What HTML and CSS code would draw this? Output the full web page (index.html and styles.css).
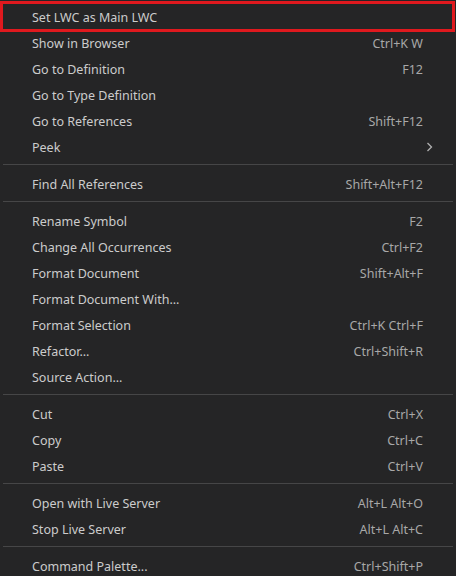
FILE: index.html
```html
<!DOCTYPE html>
<html>
<head>
<meta charset="utf-8">
<link rel="stylesheet" href="styles.css">
</head>
<body>
<div class="menu">
  <div class="item first"><span class="label">Set LWC as Main LWC</span><span class="key"></span></div>
  <div class="item"><span class="label">Show in Browser</span><span class="key">Ctrl+K W</span></div>
  <div class="item"><span class="label">Go to Definition</span><span class="key">F12</span></div>
  <div class="item"><span class="label">Go to Type Definition</span><span class="key"></span></div>
  <div class="item"><span class="label">Go to References</span><span class="key">Shift+F12</span></div>
  <div class="item"><span class="label">Peek</span><span class="key"></span>
    <svg class="chev" width="8" height="10" viewBox="0 0 8 10"><path d="M1.5 1 L5.5 5 L1.5 9" fill="none" stroke="#b0b0b0" stroke-width="1.3"/></svg>
  </div>
  <div class="sep"></div>
  <div class="item"><span class="label">Find All References</span><span class="key">Shift+Alt+F12</span></div>
  <div class="sep"></div>
  <div class="item"><span class="label">Rename Symbol</span><span class="key">F2</span></div>
  <div class="item"><span class="label">Change All Occurrences</span><span class="key">Ctrl+F2</span></div>
  <div class="item"><span class="label">Format Document</span><span class="key">Shift+Alt+F</span></div>
  <div class="item"><span class="label">Format Document With...</span><span class="key"></span></div>
  <div class="item"><span class="label">Format Selection</span><span class="key">Ctrl+K Ctrl+F</span></div>
  <div class="item"><span class="label">Refactor...</span><span class="key">Ctrl+Shift+R</span></div>
  <div class="item"><span class="label">Source Action...</span><span class="key"></span></div>
  <div class="sep"></div>
  <div class="item"><span class="label">Cut</span><span class="key">Ctrl+X</span></div>
  <div class="item"><span class="label">Copy</span><span class="key">Ctrl+C</span></div>
  <div class="item"><span class="label">Paste</span><span class="key">Ctrl+V</span></div>
  <div class="sep"></div>
  <div class="item"><span class="label">Open with Live Server</span><span class="key">Alt+L Alt+O</span></div>
  <div class="item"><span class="label">Stop Live Server</span><span class="key">Alt+L Alt+C</span></div>
  <div class="sep"></div>
  <div class="item"><span class="label">Command Palette...</span><span class="key">Ctrl+Shift+P</span></div>
  <div class="highlight"></div>
</div>
</body>
</html>
```
FILE: styles.css
```css
html, body {
  margin: 0;
  padding: 0;
  background: #252526;
  height: 100%;
  overflow: hidden;
}
.menu {
  position: relative;
  margin: 0 3px;
  padding-top: 4px;
  background: #252526;
  font-family: "Noto Sans", "Open Sans", sans-serif;
  font-size: 12.5px;
  color: #cccccc;
}
.item {
  position: relative;
  display: flex;
  align-items: center;
  height: 26px;
  padding-left: 29px;
  padding-right: 30px;
}
.label {
  flex: 1;
  white-space: nowrap;
}
.key {
  color: #a8a8a8;
  white-space: nowrap;
}
.chev {
  position: absolute;
  right: 19px;
  top: 8px;
}
.sep {
  height: 1px;
  background: #464647;
  margin: 4px 0 6px;
}
.highlight {
  position: absolute;
  left: -3px;
  top: 1px;
  width: 455px;
  height: 31px;
  box-sizing: border-box;
  border: 3px solid #e0191e;
}
```
